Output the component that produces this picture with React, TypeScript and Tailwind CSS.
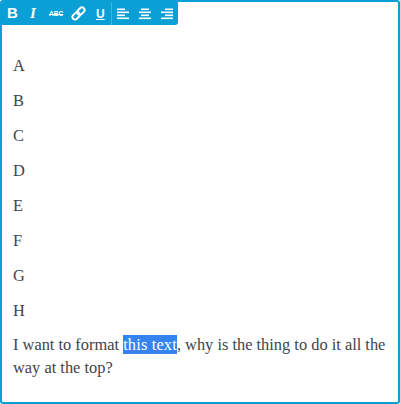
const letters = ["A", "B", "C", "D", "E", "F", "G", "H"];

function AlignIcon({ kind }: { kind: "left" | "center" | "right" }) {
  const rows = [8, 12, 8, 12];
  return (
    <svg width="12" height="12" viewBox="0 0 12 12" fill="#fff">
      {rows.map((w, i) => {
        const x = kind === "left" ? 0 : kind === "center" ? (12 - w) / 2 : 12 - w;
        return <rect key={i} x={x} y={i * 3 + 0.5} width={w} height="1.6" />;
      })}
    </svg>
  );
}

function LinkIcon() {
  return (
    <svg width="15" height="15" viewBox="0 0 15 15" fill="none" stroke="#fff" strokeWidth="1.9">
      <rect x="1" y="7.2" width="8.4" height="5.2" rx="2.6" transform="rotate(-45 5.2 9.8)" />
      <rect x="5.6" y="2.6" width="8.4" height="5.2" rx="2.6" transform="rotate(-45 9.8 5.2)" />
    </svg>
  );
}

export default function App() {
  return (
    <div className="w-[400px] h-[404px] bg-white border-2 border-[#0a9fd5] rounded-[3px] overflow-hidden font-['Liberation_Serif',serif] text-[#3f444b]">
      <div className="flex items-center w-[176px] h-[23px] bg-[#0a9fd5] rounded-br-[3px] text-white">
        <span className="ml-[5px] w-[10px] text-center text-[15px] font-bold font-['Liberation_Sans',sans-serif]">B</span>
        <span className="ml-[11px] w-[10px] text-center text-[15px] font-bold italic font-['Liberation_Serif',serif]">I</span>
        <span className="ml-[11px] w-[14px] text-[6.5px] font-bold font-['Liberation_Sans',sans-serif] line-through">ABC</span>
        <span className="ml-[8px]">
          <LinkIcon />
        </span>
        <span className="ml-[10px] w-[9px] text-[12px] font-bold underline font-['Liberation_Sans',sans-serif]">U</span>
        <div className="ml-[6px] mr-[5px] w-px h-[23px] bg-[#3fb6e0]" />
        <div className="flex gap-[10px]">
          <AlignIcon kind="left" />
          <AlignIcon kind="center" />
          <AlignIcon kind="right" />
        </div>
      </div>
      <div className="px-[11px] pt-[29px] text-[16.4px] leading-[23px]">
        <div className="flex flex-col gap-[12px]">
          {letters.map((l) => (
            <p key={l}>{l}</p>
          ))}
        </div>
        <p className="mt-[11px]">
          I want to format <span className="bg-[#3583f0] text-white tracking-[0.15px]">this text</span>, why is the thing to do it all the way at the top?
        </p>
      </div>
    </div>
  );
}
